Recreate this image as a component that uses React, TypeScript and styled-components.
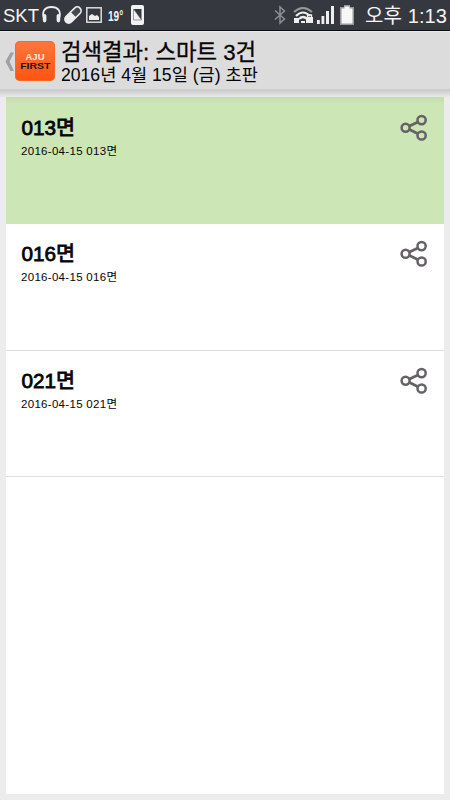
import React from "react";
import styled, { createGlobalStyle } from "styled-components";

const Global = createGlobalStyle`
  * { box-sizing: border-box; }
  body { margin: 0; background: #ececec; }
`;

const Screen = styled.div`
  width: 450px;
  height: 800px;
  display: flex;
  flex-direction: column;
  overflow: hidden;
  background: #ececec;
  color: #050505;
  font-family: "Liberation Sans", "Noto Sans CJK KR", sans-serif;
  white-space: nowrap;
`;

const StatusBar = styled.header`
  height: 31px;
  flex: none;
  display: flex;
  align-items: center;
  justify-content: space-between;
  padding: 0 3px 0 3px;
  background: #363840;
  border-bottom: 1px solid #080c14;
  color: #f4f4f4;
`;

const StatusGroup = styled.div`
  display: flex;
  align-items: center;
  height: 30px;
`;

const StatusText = styled.span<{ $size: number; $spacing?: number; $gap?: number }>`
  font-size: ${(p) => p.$size}px;
  line-height: 30px;
  letter-spacing: ${(p) => p.$spacing ?? 0}px;
  margin-left: ${(p) => p.$gap ?? 0}px;
  padding-top: 2px;
`;

const Temperature = styled.span`
  width: 16px;
  margin-left: 6px;
  padding-top: 2px;
  font: bold 14px/28px "Liberation Sans", sans-serif;
  transform: scaleX(0.72);
  transform-origin: left;
`;

const Icon = styled.svg<{ $gap?: number }>`
  display: block;
  flex: none;
  margin-left: ${(p) => p.$gap ?? 0}px;
`;

const AppBar = styled.div`
  height: 59px;
  flex: none;
  display: flex;
  align-items: flex-start;
  padding: 10px 0 0 5px;
  background: #dcdcdc;
  border-bottom: 1px solid #cecece;
  box-shadow: inset 0 1px 0 #e8e8e8;
`;

const Logo = styled.div`
  width: 40px;
  height: 40px;
  margin-left: 1px;
  border-radius: 5px;
  display: flex;
  flex-direction: column;
  align-items: center;
  padding-top: 11px;
  background: linear-gradient(#ff783d, #ff530f);
  box-shadow: inset 0 0 0 1px #f96827;
  font-weight: bold;
`;

const LogoTop = styled.span`
  color: #ffe9dc;
  font-size: 9.5px;
  line-height: 9px;
`;

const LogoBottom = styled.span`
  color: #22150f;
  font-size: 8.5px;
  line-height: 10px;
  transform: scaleX(1.23);
`;

const Heading = styled.div`
  margin-left: 6px;
  display: flex;
  flex-direction: column;
`;

const Title = styled.h1`
  margin: 0 0 1px;
  height: 23px;
  font: 400 22.3px/23px "Liberation Sans", "Noto Sans CJK KR", sans-serif;
  -webkit-text-stroke: 0.3px #050505;
`;

const Subtitle = styled.div`
  font-size: 17.6px;
  line-height: 21px;
`;

const Shade = styled.div`
  height: 7px;
  flex: none;
  background: linear-gradient(#cbcbcb, #e8e8e8);
`;

const List = styled.main`
  width: 438px;
  height: 697px;
  margin-left: 6px;
  background: #fff;
  border-radius: 0 0 1px 1px;
`;

const Row = styled.article<{ $selected?: boolean }>`
  height: 126.8px;
  display: flex;
  justify-content: space-between;
  padding: 16.6px 16px 0 15px;
  background: ${(p) => (p.$selected ? "linear-gradient(#c5dcac, #cde6b5 7px)" : "#fff")};
  border-bottom: 1px solid ${(p) => (p.$selected ? "#d3e2c5" : "#dedede")};
`;

const RowTitle = styled.h2`
  margin: 0;
  font-size: 20.7px;
  font-weight: 400;
  -webkit-text-stroke: 0.8px #050505;
  line-height: 27px;
  padding-left: 0.5px;
`;

const RowDate = styled.div`
  margin-top: 2px;
  font-size: 11.5px;
  line-height: 16px;
  letter-spacing: 0.3px;
`;

const ShareIcon = () => (
  <Icon width="28" height="28" viewBox="0 0 28 28" fill="none" stroke="#656166">
    <path d="M9.5 12 18 8M9.5 15.6 18 19.8" strokeWidth="2.8" />
    <circle cx="5.6" cy="13.8" r="4" strokeWidth="2.5" />
    <circle cx="21.6" cy="6.1" r="4.1" strokeWidth="2.5" />
    <circle cx="21.6" cy="21.5" r="4.1" strokeWidth="2.5" />
  </Icon>
);

const pages = ["013면", "016면", "021면"];

export default function App() {
  return (
    <>
      <Global />
      <Screen>
        <StatusBar>
          <StatusGroup>
            <StatusText $size={18.5}>SKT</StatusText>
            <Icon $gap={2} width="21" height="20" viewBox="0 0 21 20" fill="none" stroke="#eee">
              <path d="M3 14C0 5 5 2 10.5 2S21 5 18 14" strokeWidth="1.8" />
              <path d="M3.6 10.8v4.8M17.4 10.8v4.8" strokeWidth="3.6" strokeLinecap="round" />
            </Icon>
            <Icon $gap={1} width="20" height="20" viewBox="0 0 20 20">
              <g transform="rotate(-45 10 10)">
                <rect x="-.7" y="5.4" width="21.4" height="9.2" rx="4.6" fill="#eee" />
                <path d="M10.5 7H16a3 3 0 0 1 0 6h-5.5z" fill="#47494f" />
              </g>
            </Icon>
            <Icon $gap={3} width="16" height="16" viewBox="0 0 16 16">
              <rect x=".8" y=".8" width="14.4" height="14.4" fill="none" stroke="#ddd" strokeWidth="1.5" />
              <path d="M3 13V9l3-2 3 2 2-1 2 2v3z" fill="#eee" />
            </Icon>
            <Temperature>19°</Temperature>
            <Icon $gap={7} width="13" height="20" viewBox="0 0 13 20">
              <rect width="13" height="20" rx="2" fill="#f2f2f2" />
              <path d="M2.5 4h8v11z" fill="#36383f" />
              <path d="M2.5 4v11h8z" fill="none" stroke="#777" strokeWidth=".7" />
            </Icon>
          </StatusGroup>
          <StatusGroup>
            <Icon width="12" height="20" viewBox="0 0 12 20" fill="none" stroke="#8c8e92" strokeWidth="1.5">
              <path d="M1 5.5 10.5 14 6 18V2l4.5 4L1 14.5" />
            </Icon>
            <Icon $gap={7} width="21" height="20" viewBox="0 0 21 20" fill="none">
              <path d="M1 7Q10 -1 19 7" stroke="#999" strokeWidth="2" />
              <path d="M3 11Q10 4 17 11M6 14Q10 10 14 14" stroke="#eee" strokeWidth="2.2" />
              <path d="M1 13h5v5H1zM8 16h4v2H8z" fill="#eee" />
              <rect x="13" y="12" width="7" height="6" fill="#eee" />
              <path d="M14.5 12v-2h4v2" stroke="#eee" strokeWidth="1.3" />
            </Icon>
            <Icon $gap={3} width="17" height="20" viewBox="0 0 17 20" fill="#eee">
              <path d="M0 15h2.8v4H0zM4.5 11h2.8v8H4.5zM9 6h3v13H9zM14 1h3v18h-3z" />
            </Icon>
            <Icon $gap={6} width="14" height="20" viewBox="0 0 14 20">
              <path d="M4 0h6v2h4v18H0V2h4z" fill="#999" />
              <path d="M4.5 1.5h5v2h3v15h-11v-15h3z" fill="#f7f7f7" />
            </Icon>
            <StatusText $size={20} $gap={11} $spacing={0.1}>오후 1:13</StatusText>
          </StatusGroup>
        </StatusBar>
        <AppBar>
          <Icon width="9" height="40" viewBox="0 0 9 40">
            <path d="M5.5 11.5H9L4.5 20.5 9 30H5.5L.5 20.5z" fill="#a0a0a0" />
          </Icon>
          <Logo>
            <LogoTop>AJU</LogoTop>
            <LogoBottom>FIRST</LogoBottom>
          </Logo>
          <Heading>
            <Title>검색결과: 스마트 3건</Title>
            <Subtitle>2016년 4월 15일 (금) 초판</Subtitle>
          </Heading>
        </AppBar>
        <Shade />
        <List>
          {pages.map((page, index) => (
            <Row key={page} $selected={index === 0}>
              <div>
                <RowTitle>{page}</RowTitle>
                <RowDate>2016-04-15 {page}</RowDate>
              </div>
              <ShareIcon />
            </Row>
          ))}
        </List>
      </Screen>
    </>
  );
}
